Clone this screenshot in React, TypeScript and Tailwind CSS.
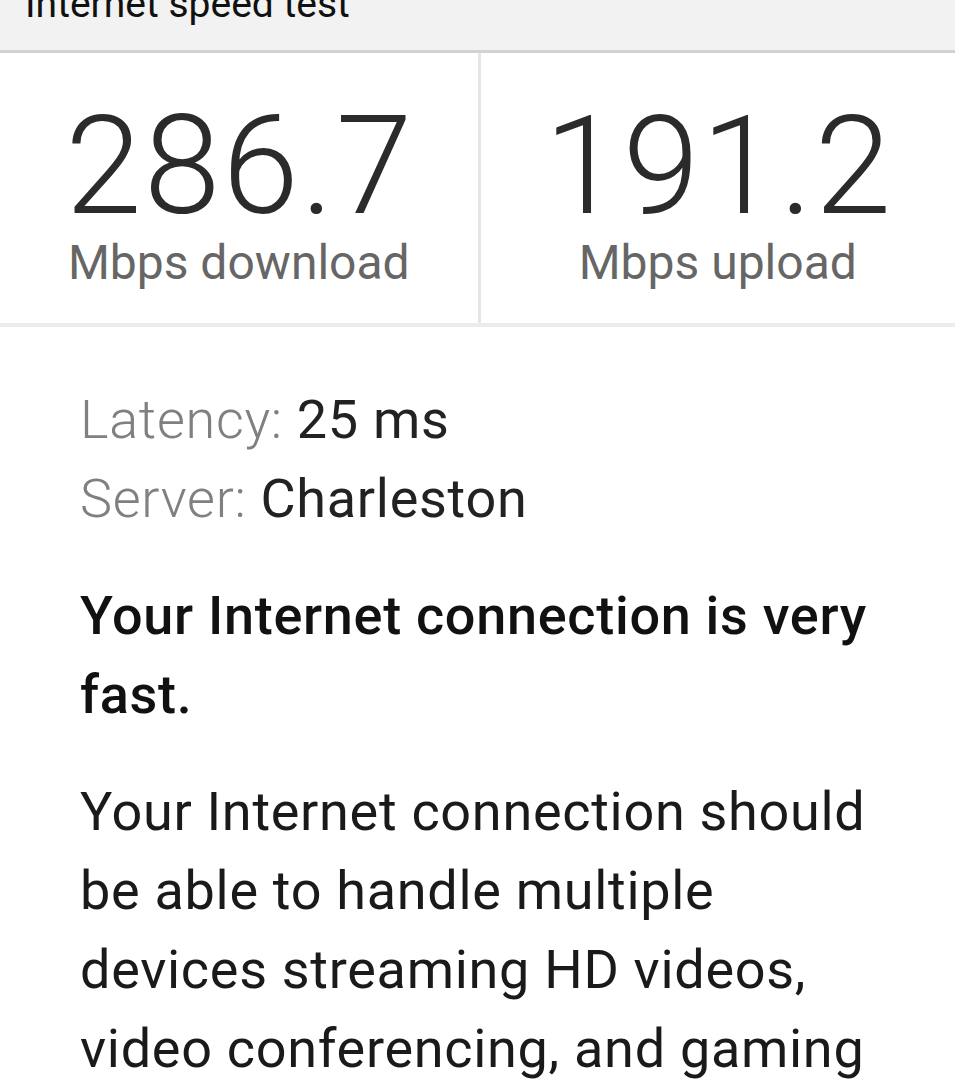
const stats = [
  { value: '286.7', label: 'Mbps download' },
  { value: '191.2', label: 'Mbps upload' },
];

const App = () => {
  return (
    <section className="min-h-screen bg-white font-['Roboto',sans-serif] text-[#222]">
      {/* header, scrolled so only the bottom of the title shows */}
      <header className="h-[53px] overflow-hidden border-b-[3px] border-[#d2d2d2] bg-[#f2f2f3] pl-[25px]">
        <h1 className="-mt-[15px] text-[39px] leading-none font-normal whitespace-nowrap text-[#111]">
          Internet speed test
        </h1>
      </header>

      {/* speeds */}
      <div className="grid grid-cols-2 border-b-[4px] border-[#ececec]">
        {stats.map((stat, index) => (
          <div
            key={stat.label}
            className={`flex flex-col items-center pt-[44px] pb-[36px] ${index > 0 ? 'border-l-[3px] border-[#e6e6e6]' : ''}`}
          >
            <span className="pl-[2px] text-[138px] leading-none font-light tracking-[2px] text-[#2b2b2b]">
              {stat.value}
            </span>
            <span className="mt-[4px] text-[48px] leading-none font-normal text-[#666]">
              {stat.label}
            </span>
          </div>
        ))}
      </div>

      {/* details */}
      <article className="px-[80px] pt-[53px] text-[54px] leading-[79px] tracking-[0.7px]">
        <div>
          <p>
            <span className="font-light text-[#808080]">Latency: </span>
            <span className="text-[#222]">25 ms</span>
          </p>
          <p>
            <span className="font-light text-[#808080]">Server: </span>
            <span className="text-[#222]">Charleston</span>
          </p>
        </div>

        <p className="mt-[38px] font-medium text-[#111]">
          Your Internet connection is very fast.
        </p>

        <p className="mt-[38px] text-[#1a1a1a]">
          Your Internet connection should be able to handle multiple devices streaming HD videos,
          video conferencing, and gaming at the same time.
        </p>
      </article>
    </section>
  );
};

export default App;
